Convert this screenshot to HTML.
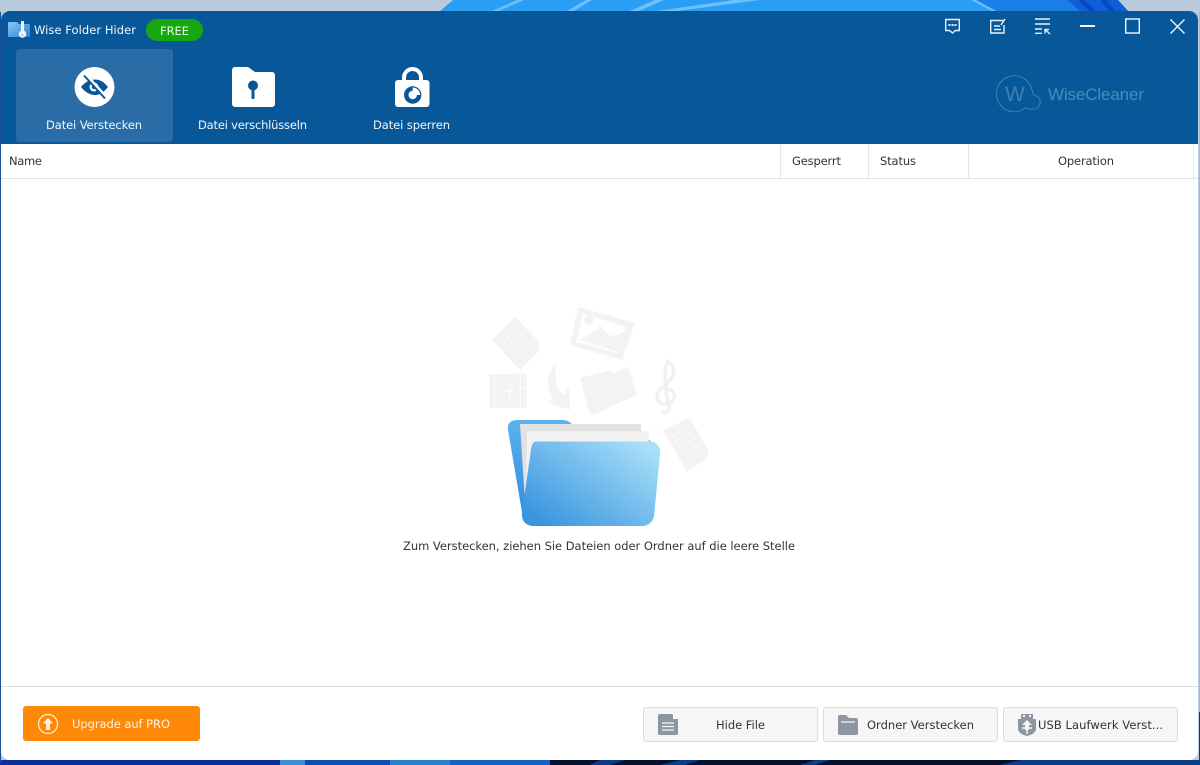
<!DOCTYPE html>
<html lang="de"><head><meta charset="utf-8"><title>Wise Folder Hider</title>
<style>
html,body{margin:0;padding:0;width:1200px;height:765px;overflow:hidden;background:#b8cbdc}
body{position:relative;font-family:"DejaVu Sans",sans-serif}
svg.bg,svg.ov{position:absolute;left:0;top:0}
#win{position:absolute;left:1px;top:11px;width:1197px;height:749px;background:#fff;border-radius:9px;overflow:hidden}
#head{position:absolute;left:0;top:0;width:1197px;height:133px;background:#085899}
#tab{position:absolute;left:15px;top:38px;width:157px;height:93px;background:#2a6ca5;border-radius:3px}
.sep{position:absolute;top:144px;width:1px;height:34px;background:#e3e6e9}
.btn{position:absolute;top:707px;width:173px;height:33px;background:#f6f6f6;border:1px solid #dcdcdc;border-radius:3px}
text{font-family:"DejaVu Sans",sans-serif;font-size:11.5px}
.w{fill:#f2f7fb}.d{fill:#333}
</style></head><body>
<svg class="bg" width="1200" height="765" viewBox="0 0 1200 765">
<rect width="1200" height="12" fill="#b8cbdc"/>
<path d="M439 12L453 0H1118L1129 12Z" fill="#2a9ef5"/>
<path d="M994 12L971 0H1067L1081 12Z" fill="#1a80e8"/>
<path d="M1081 12L1067 0H1118L1129 12Z" fill="#0f5fdc"/>
<path d="M490 12L517 0H524L497 12ZM565 12L586 0H592L572 12ZM627 12L655 0H664L637 12ZM650 12L733 0H760L670 12ZM971 0H976L998 12H994Z" fill="#6cc0f8"/>
<path d="M1090 12L1078 0H1084L1098 12ZM1110 12L1100 0H1106L1116 12Z" fill="#0a48c0"/>
<rect y="760" width="1200" height="5" fill="#041030"/>
<rect y="760" width="280" height="5" fill="#0a2f9c"/>
<rect x="280" y="760" width="25" height="5" fill="#3a8fd8"/>
<rect x="305" y="760" width="85" height="5" fill="#0e4cb8"/>
<rect x="390" y="760" width="60" height="5" fill="#2a80d0"/>
<rect x="450" y="760" width="100" height="5" fill="#1560c8"/>
<path d="M590 765L600 760H625L610 765ZM660 765L680 760H700L685 765ZM800 765L815 760H830L815 765ZM1000 765L1020 760H1200V765Z" fill="#0d3c86"/>
<rect x="1199" y="12" width="1" height="700" fill="#a8bccd"/>
<rect x="1199" y="712" width="1" height="53" fill="#0d3c86"/>
<rect x="0" y="12" width="1" height="750" fill="#1c50a0"/>
</svg>
<div id="win"><div id="head"></div><div id="tab"></div>
<div style="position:absolute;left:0;top:167px;width:1197px;height:1px;background:#dfe2e5"></div>
<div style="position:absolute;left:0;top:675px;width:1197px;height:1px;background:#dcdfe2"></div>
</div>

<div class="sep" style="left:780px"></div><div class="sep" style="left:868px"></div><div class="sep" style="left:968px"></div><div class="sep" style="left:1193px"></div>

<div style="position:absolute;left:146px;top:19px;width:57px;height:22px;border-radius:11px;background:#17a711"></div>
<div style="position:absolute;left:23px;top:706px;width:177px;height:35px;background:#ff8806;border-radius:3px"></div>
<div class="btn" style="left:643px"></div><div class="btn" style="left:823px"></div><div class="btn" style="left:1003px"></div>

<svg class="ov" width="1200" height="765" viewBox="0 0 1200 765">
<defs>
<linearGradient id="f1" x1="0" y1="1" x2="1" y2="0.15"><stop offset="0.1" stop-color="#3a95e0"/><stop offset="1" stop-color="#a9e0f8"/></linearGradient>
<linearGradient id="f2" x1="0" y1="0" x2="0" y2="1"><stop offset="0" stop-color="#5bb2ec"/><stop offset="1" stop-color="#2e8bdc"/></linearGradient>
<linearGradient id="f3" x1="0" y1="0" x2="1" y2="1"><stop offset="0" stop-color="#8cc8f2"/><stop offset="1" stop-color="#2a7fd6"/></linearGradient>
</defs>
<!-- texts -->
<text class="w" x="34" y="34" textLength="102" lengthAdjust="spacing">Wise Folder Hider</text>
<text x="160" y="35" textLength="29" lengthAdjust="spacing" fill="#eef9ea">FREE</text>
<text class="w" x="46" y="129" textLength="96" lengthAdjust="spacing">Datei Verstecken</text>
<text class="w" x="198" y="129" textLength="109" lengthAdjust="spacing">Datei verschlüsseln</text>
<text class="w" x="373" y="129" textLength="77" lengthAdjust="spacing">Datei sperren</text>
<text x="1048" y="100" textLength="96" lengthAdjust="spacing" fill="#4b8abc" style="font-family:'Liberation Sans',sans-serif;font-size:17px">WiseCleaner</text>
<text class="d" x="9" y="165" textLength="33" lengthAdjust="spacing">Name</text>
<text class="d" x="792" y="165" textLength="49" lengthAdjust="spacing">Gesperrt</text>
<text class="d" x="880" y="165" textLength="36" lengthAdjust="spacing">Status</text>
<text class="d" x="1058" y="165" textLength="56" lengthAdjust="spacing">Operation</text>
<text class="d" x="403" y="550" textLength="392" lengthAdjust="spacing">Zum Verstecken, ziehen Sie Dateien oder Ordner auf die leere Stelle</text>
<text x="72" y="728" textLength="98" lengthAdjust="spacing" fill="#fff3e2">Upgrade auf PRO</text>
<text class="d" x="716" y="729" textLength="49" lengthAdjust="spacing">Hide File</text>
<text class="d" x="867" y="729" textLength="107" lengthAdjust="spacing">Ordner Verstecken</text>
<text class="d" x="1038" y="729" textLength="125" lengthAdjust="spacing">USB Laufwerk Verst...</text>
<!-- app logo -->
<path d="M8 23a1 1 0 0 1 1-1H17L19 24H29a1 1 0 0 1 1 1V36a1 1 0 0 1-1 1H9a1 1 0 0 1-1-1Z" fill="url(#f3)"/>
<path d="M21 21h3v12h-3Z" fill="#eaf3fa"/><circle cx="22.500" cy="34" r="3.800" fill="#eaf3fa"/><circle cx="22.500" cy="35" r=".9" fill="#8ab0d0"/>
<!-- eye tab icon -->
<circle cx="94.500" cy="87" r="20" fill="#fff"/>
<path d="M81 87c4-5 9-7.500 14-7.500s9 2.500 13 7.500c-4 5-8 8-13 8s-10-3-14-8Z" fill="#085899"/><circle cx="94" cy="87" r="4.500" fill="#fff"/><circle cx="94" cy="87" r="2.200" fill="#085899"/>
<path d="M85.500 74L106.500 97" stroke="#fff" stroke-width="2.500"/><path d="M84 75.500L105 98.500" stroke="#085899" stroke-width="2"/>
<!-- folder key -->
<path d="M232 70a3 3 0 0 1 3-3h13l7 5h17a3 3 0 0 1 3 3v29a3 3 0 0 1-3 3h-37a3 3 0 0 1-3-3Z" fill="#fff"/>
<circle cx="253" cy="85.500" r="5" fill="#085899"/><rect x="251.500" y="87" width="3" height="12" rx="1" fill="#085899"/>
<!-- lock -->
<path d="M404 84v-6.500a8.500 8.500 0 0 1 17 0v6.500" fill="none" stroke="#fff" stroke-width="4"/>
<rect x="395" y="80" width="34.500" height="27" rx="3" fill="#fff"/>
<circle cx="412.700" cy="95" r="8.700" fill="#085899"/><circle cx="412.700" cy="95" r="4.200" fill="#fff"/>
<path d="M412.700 95V87.500A7.500 7.500 0 0 1 420.200 95Z" fill="#fff"/>
<!-- top right -->
<g fill="none" stroke="#e8f0f7" stroke-width="1.400">
<path d="M945.700 19.500H959.300V30.500H955.500L952.500 33L949.500 30.500H945.700Z"/>
<path d="M1003 20.500H990.700V33H1004V25"/><path d="M994 26H1000M994 29.500H1001"/><path d="M1001 25L1005 19"/>
<path d="M1035 19H1050M1035 24H1050M1035 29H1042M1035 33.300H1042"/>
<path d="M1045 33.500L1045 29.500H1049M1045.500 30L1050 34"/>
</g>
<path d="M948.500 24h2v2h-2zM951.500 24h2v2h-2zM954.500 24h2v2h-2z" fill="#e8f0f7"/>
<rect x="1080" y="25" width="15" height="2" fill="#f0f5fa"/>
<rect x="1125.700" y="19" width="13.600" height="14" fill="none" stroke="#f0f5fa" stroke-width="1.400"/>
<path d="M1170.500 19.500L1184.500 33.500M1184.500 19.500L1170.500 33.500" stroke="#f0f5fa" stroke-width="1.400" fill="none"/>
<!-- wisecleaner logo -->
<path d="M1032 90A18 18 0 1 0 1026 107.500C1029 110 1036 110 1039 106C1042 100 1039 96 1034 95.500C1033 94 1032.500 92 1032 90Z" fill="none" stroke="#3f80b4" stroke-width="1"/>
<text x="1005" y="101" fill="#3f80b4" style="font-family:'Liberation Sans',sans-serif;font-size:21px">W</text>
<!-- upload circle -->
<circle cx="48" cy="724" r="9.500" fill="none" stroke="#fff1dc" stroke-width="1.200"/><path d="M48 718L53 723.500H50V730H46V723.500H43Z" fill="#fff1dc"/>
<!-- button icons -->
<path d="M658 716a2 2 0 0 1 2-2H672L678 719V733a2 2 0 0 1-2 2H660a2 2 0 0 1-2-2Z" fill="#8d97a4"/><path d="M673 714L678 719H673Z" fill="#f6f6f6"/><path d="M662 723H674M662 726.500H674M662 730H674" stroke="#f6f6f6" stroke-width="1.200"/>
<path d="M838 717a2 2 0 0 1 2-2H846L849 718H856a2 2 0 0 1 2 2V733a2 2 0 0 1-2 2H840a2 2 0 0 1-2-2Z" fill="#8d97a4"/><path d="M841 722H855" stroke="#f6f6f6" stroke-width="1.200"/>
<path d="M1018 719H1036V729C1036 732 1032 735 1027 736C1022 735 1018 732 1018 729Z" fill="#8d97a4"/><rect x="1021" y="714" width="12" height="5" fill="#8d97a4"/><path d="M1023 715h2v2h-2zM1029 715h2v2h-2z" fill="#f6f6f6"/>
<path d="M1027 720L1032 725H1029V730H1025V725H1022Z" fill="#f6f6f6"/><path d="M1022 728H1032M1027 730V734" stroke="#f6f6f6" stroke-width="1.500"/>
<!-- ghost icons -->
<g fill="#f3f3f3">
<path d="M515 317L540 343L538 352L520 370L492 340Z"/>
<path d="M578 307L635 323L622 360L570 345Z"/>
<path d="M489 374H527V408H489Z"/>
<path d="M557 363C547 371 545 388 553 398L547 402L570 410L569 387L563 395C556 388 553 375 557 363Z"/>
<path d="M580 378L610 370L613 373L628 367L637 395L595 414C592 415 590 414 589 412Z"/>
<path d="M663 430L690 418L709 452L707 458L687 472Z"/>
</g>
<path d="M583 314L627 327L617 353L576 342Z" fill="#fff"/>
<circle cx="589" cy="320" r="4.500" fill="#f3f3f3"/><path d="M580 340L600 327L612 337L627 330L618 352Z" fill="#f3f3f3"/>
<path d="M666 361C672 362 675 369 673 375C671 381 666 384 662 388C657 392 655 398 659 402C664 406 672 404 674 398C676 393 671 388 667 390M667 363C664 368 665 392 669 405C670 412 665 414 661 411" fill="none" stroke="#f1f1f1" stroke-width="3.500"/>
<g stroke="#fbfbfb" fill="none">
<path d="M495 374V408M520 374V408M489 381H495M489 388H495M489 395H495M489 402H495M520 381H527M520 388H527M520 395H527M520 402H527" stroke-width="1"/>
<path d="M510 381V402M503 391H515" stroke-width="1.500"/>
<path d="M671 437L688 427M674 443L692 432M677 449L696 438M680 455L699 444" stroke-width="1"/>
<path d="M507 337L515 330L521 337L513 345Z" stroke-width="1"/>
</g>
<!-- big folder -->
<path d="M508 430C507 423 511 420 517 420H562C568 420 571 423 574 426L650 440V470L530 524L522 512Z" fill="url(#f2)"/>
<path d="M520 424H641V440L525 502Z" fill="#e2e2e2"/>
<path d="M527 431H649V445L526 502Z" fill="#f2f2f2"/>
<path d="M536 441.500H650C656 441.500 661 446 660 455L654 516C653 522 648 526 642 526H534C526 526 521 521 522 512L531 450C531.500 445 533 441.500 536 441.500Z" fill="url(#f1)"/>
</svg>
</body></html>
